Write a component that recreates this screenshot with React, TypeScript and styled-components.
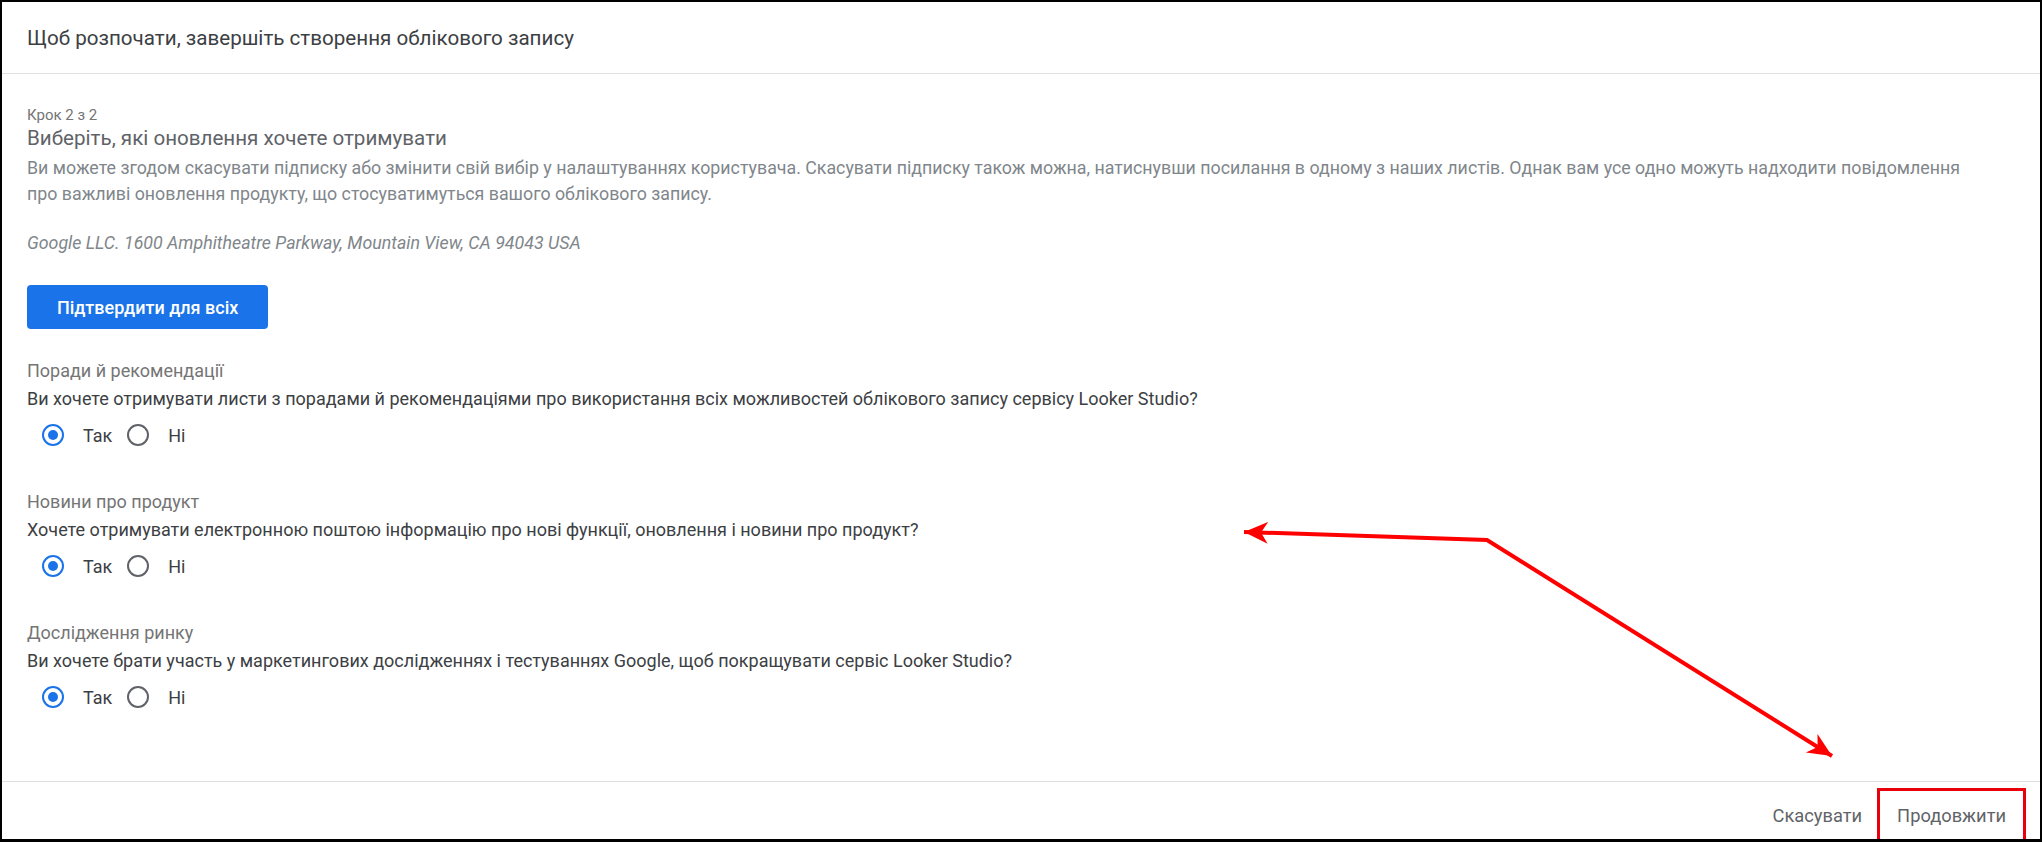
import styled, { createGlobalStyle } from "styled-components";

const GlobalStyle = createGlobalStyle`
  * { box-sizing: border-box; }
  html, body { margin: 0; padding: 0; background: #000; }
  body { font-family: Roboto, "Noto Sans", Arial, sans-serif; }
`;

const Frame = styled.div`
  position: relative;
  width: 2042px;
  height: 842px;
  border: 2px solid #000;
  border-bottom-width: 3px;
  background: #fff;
  display: flex;
  flex-direction: column;
  overflow: hidden;
`;

const Header = styled.div`
  height: 72px;
  display: flex;
  align-items: center;
  padding: 0 25px;
  border-bottom: 1px solid #e0e0e0;
  font-size: 20.6px;
  color: #3c4043;
`;

const Body = styled.div`
  flex: 1;
  padding: 31px 25px 0;
  display: flex;
  flex-direction: column;
`;

const Step = styled.div`
  font-size: 15px;
  line-height: 20px;
  color: #757575;
`;

const Heading = styled.div`
  font-size: 20.6px;
  line-height: 26px;
  color: #5f6368;
`;

const Paragraph = styled.p`
  margin: 4px 0 0;
  max-width: 1965px;
  font-size: 17.8px;
  line-height: 26px;
  color: #80868b;
`;

const Address = styled.p`
  margin: 23px 0 0;
  font-size: 17.8px;
  line-height: 26px;
  font-style: italic;
  color: #80868b;
`;

const PrimaryButton = styled.button`
  align-self: flex-start;
  margin-top: 29px;
  height: 44px;
  padding: 0 30px;
  border: none;
  border-radius: 4px;
  background: #1a73e8;
  color: #fff;
  font-family: inherit;
  font-size: 18px;
  font-weight: 500;
  cursor: pointer;
`;

const Section = styled.div<{ $first?: boolean }>`
  margin-top: ${({ $first }) => ($first ? "30px" : "35px")};
  display: flex;
  flex-direction: column;
  gap: 4px;
`;

const Label = styled.div`
  font-size: 18px;
  line-height: 24px;
  color: #757575;
`;

const Question = styled.div`
  font-size: 18px;
  line-height: 24px;
  color: #3c4043;
`;

const RadioRow = styled.div`
  display: flex;
  align-items: center;
  height: 40px;
  padding-left: 15px;
`;

const RadioOption = styled.label`
  display: flex;
  align-items: center;
  gap: 19px;
  margin-right: 15px;
  font-size: 18px;
  color: #3c4043;
`;

const RadioCircle = styled.span<{ $checked?: boolean }>`
  width: 22px;
  height: 22px;
  border-radius: 50%;
  border: 2px solid ${({ $checked }) => ($checked ? "#1a73e8" : "#5f6368")};
  display: flex;
  align-items: center;
  justify-content: center;

  &::after {
    content: "";
    width: 10px;
    height: 10px;
    border-radius: 50%;
    background: ${({ $checked }) => ($checked ? "#1a73e8" : "transparent")};
  }
`;

const Footer = styled.div`
  height: 58px;
  border-top: 1px solid #e0e0e0;
  display: flex;
  justify-content: flex-end;
  align-items: flex-end;
  padding-right: 14px;
`;

const TextButton = styled.button<{ $highlighted?: boolean }>`
  height: 51px;
  padding: 0 ${({ $highlighted }) => ($highlighted ? "17px" : "12px")};
  background: transparent;
  border: 3px solid ${({ $highlighted }) => ($highlighted ? "#e8000b" : "transparent")};
  border-bottom: none;
  color: #5f6368;
  font-family: inherit;
  font-size: 18.3px;
  cursor: pointer;
`;

const Overlay = styled.svg`
  position: absolute;
  left: 0;
  top: 0;
  pointer-events: none;
`;

type Item = { label: string; question: string };

const items: Item[] = [
  {
    label: "Поради й рекомендації",
    question:
      "Ви хочете отримувати листи з порадами й рекомендаціями про використання всіх можливостей облікового запису сервісу Looker Studio?",
  },
  {
    label: "Новини про продукт",
    question:
      "Хочете отримувати електронною поштою інформацію про нові функції, оновлення і новини про продукт?",
  },
  {
    label: "Дослідження ринку",
    question:
      "Ви хочете брати участь у маркетингових дослідженнях і тестуваннях Google, щоб покращувати сервіс Looker Studio?",
  },
];

const App = () => {
  return (
    <>
      <GlobalStyle />
      <Frame>
        <Header>Щоб розпочати, завершіть створення облікового запису</Header>
        <Body>
          <Step>Крок 2 з 2</Step>
          <Heading>Виберіть, які оновлення хочете отримувати</Heading>
          <Paragraph>
            Ви можете згодом скасувати підписку або змінити свій вибір у налаштуваннях користувача. Скасувати
            підписку також можна, натиснувши посилання в одному з наших листів. Однак вам усе одно можуть
            надходити повідомлення про важливі оновлення продукту, що стосуватимуться вашого облікового запису.
          </Paragraph>
          <Address>Google LLC. 1600 Amphitheatre Parkway, Mountain View, CA 94043 USA</Address>
          <PrimaryButton>Підтвердити для всіх</PrimaryButton>
          {items.map((item, index) => (
            <Section key={index} $first={index === 0}>
              <Label>{item.label}</Label>
              <Question>{item.question}</Question>
              <RadioRow>
                <RadioOption>
                  <RadioCircle $checked />
                  Так
                </RadioOption>
                <RadioOption>
                  <RadioCircle />
                  Ні
                </RadioOption>
              </RadioRow>
            </Section>
          ))}
        </Body>
        <Footer>
          <TextButton>Скасувати</TextButton>
          <TextButton $highlighted>Продовжити</TextButton>
        </Footer>
        <Overlay width="2042" height="842">
          <defs>
            <marker
              id="head"
              markerUnits="userSpaceOnUse"
              markerWidth="30"
              markerHeight="24"
              refX="24"
              refY="11"
              orient="auto-start-reverse"
            >
              <path d="M0,0 L24,11 L0,22 L7,11 z" fill="#f00" />
            </marker>
          </defs>
          <path
            d="M1242,530 L1485,538 L1830,754"
            fill="none"
            stroke="#f00"
            strokeWidth="4"
            markerStart="url(#head)"
            markerEnd="url(#head)"
          />
        </Overlay>
      </Frame>
    </>
  );
};

export default App;
